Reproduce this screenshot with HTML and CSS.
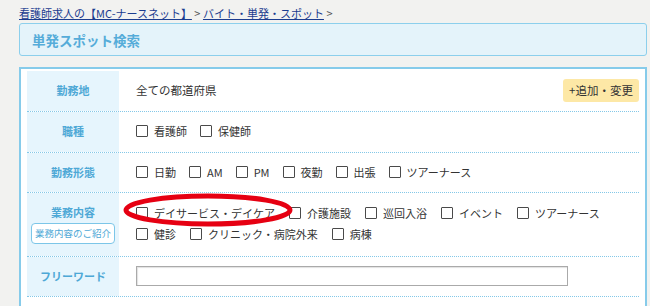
FILE: index.html
```html
<!DOCTYPE html>
<html lang="ja">
<head>
    <meta charset="UTF-8">
    <title>単発スポット検索</title>
    <link rel="stylesheet" href="styles.css">
</head>
<body>
<div class="page">
    <div class="crumb">
        <a href="#">看護師求人の【MC-ナースネット】</a> &gt;
        <a href="#">バイト・単発・スポット</a> &gt;
    </div>
    <div class="head"><h1>単発スポット検索</h1></div>

    <div class="search">
        <div class="row r1">
            <div class="lbl">勤務地</div>
            <div class="val">
                <span class="pref">全ての都道府県</span>
                <a class="add-btn" href="#">+追加・変更</a>
            </div>
        </div>
        <div class="row r2">
            <div class="lbl">職種</div>
            <div class="val">
                <label class="chk"><input type="checkbox">看護師</label>
                <label class="chk"><input type="checkbox">保健師</label>
            </div>
        </div>
        <div class="row r3">
            <div class="lbl">勤務形態</div>
            <div class="val">
                <label class="chk"><input type="checkbox">日勤</label>
                <label class="chk"><input type="checkbox">AM</label>
                <label class="chk"><input type="checkbox">PM</label>
                <label class="chk"><input type="checkbox">夜勤</label>
                <label class="chk"><input type="checkbox">出張</label>
                <label class="chk"><input type="checkbox">ツアーナース</label>
            </div>
        </div>
        <div class="row r4">
            <div class="lbl lbl-stack">
                <span>業務内容</span>
                <a class="intro-btn" href="#">業務内容のご紹介</a>
            </div>
            <div class="val val-wrap">
                <div class="line">
                    <label class="chk"><input type="checkbox">デイサービス・デイケア</label>
                    <label class="chk"><input type="checkbox">介護施設</label>
                    <label class="chk"><input type="checkbox">巡回入浴</label>
                    <label class="chk"><input type="checkbox">イベント</label>
                    <label class="chk"><input type="checkbox">ツアーナース</label>
                </div>
                <div class="line">
                    <label class="chk"><input type="checkbox">健診</label>
                    <label class="chk"><input type="checkbox">クリニック・病院外来</label>
                    <label class="chk"><input type="checkbox">病棟</label>
                </div>
            </div>
            <!-- red circle drawn over the first option -->
            <svg class="mark" width="176" height="40" viewBox="0 0 176 40">
                <ellipse cx="85" cy="17" rx="82" ry="14" fill="none" stroke="#e60012" stroke-width="5"/>
            </svg>
        </div>
        <div class="row r5">
            <div class="lbl">フリーワード</div>
            <div class="val">
                <input class="word" type="text">
            </div>
        </div>
    </div>
</div>
</body>
</html>
```

FILE: styles.css
```css
*{margin: 0;padding: 0;box-sizing: border-box;}
body{background: #f2f2f0;font-family: "Noto Sans CJK JP", "Noto Sans", sans-serif;color: #333;}
.page{width: 628px;margin-left: 19px;}

.crumb{font-size: 11px;line-height: 16px;padding-top: 5px;color: #555;}
.crumb a{color: #1b3c8f;text-decoration: underline;}

.head{margin-top: 2px;height: 33px;background: #e4f3fa;border: 1px solid #8ccfec;border-radius: 3px;display: flex;align-items: center;padding-left: 12px;}
.head h1{font-size: 13.5px;font-weight: bold;color: #55acd9;}

.search{margin-top: 11px;background: #fff;border: 2px solid #86cbea;border-bottom: none;padding: 2px 6px 10px 6px;}

.row{display: flex;border-bottom: 1px dotted #84c8e8;position: relative;}
.r1,.r2{height: 41px;}
.r3{height: 40px;}
.r4{height: 64px;}
.r5{height: 40px;}

.lbl{width: 92px;flex: none;background: #e6f5fd;display: flex;align-items: center;justify-content: center;padding-bottom: 2px;font-size: 11px;font-weight: bold;color: #4ea8d6;}
.lbl-stack{flex-direction: column;gap: 3px;padding: 0 0 1px 0;}
.intro-btn{display: block;width: 84px;height: 21px;line-height: 19px;border: 1px solid #7cc6e8;border-radius: 4px;background: #fff;color: #4ea8d6;font-size: 9.5px;font-weight: normal;text-align: center;text-decoration: none;}

.val{flex: 1;display: flex;align-items: center;padding-left: 17px;padding-bottom: 2px;font-size: 11px;}
.val-wrap{flex-direction: column;align-items: flex-start;justify-content: center;}
.line{display: flex;height: 21px;align-items: center;}
.line .chk{margin-right: 14px;}
.pref{font-size: 11.5px;}

.add-btn{margin-left: auto;width: 76px;height: 23px;line-height: 23px;text-align: center;background: #fde8a6;border-radius: 3px;color: #333;font-size: 11.5px;text-decoration: none;}

.chk{display: flex;align-items: center;margin-right: 13px;}
.chk input{-webkit-appearance: none;appearance: none;width: 12px;height: 12px;border: 1px solid #4a4a4a;border-radius: 1px;background: #fff;margin-right: 6px;}

.word{width: 432px;height: 20px;border: 1px solid #aaa;box-shadow: inset 1px 1px 1px #e2e2e2;background: #fff;}

.mark{position: absolute;left: 96px;top: 0;}
```
